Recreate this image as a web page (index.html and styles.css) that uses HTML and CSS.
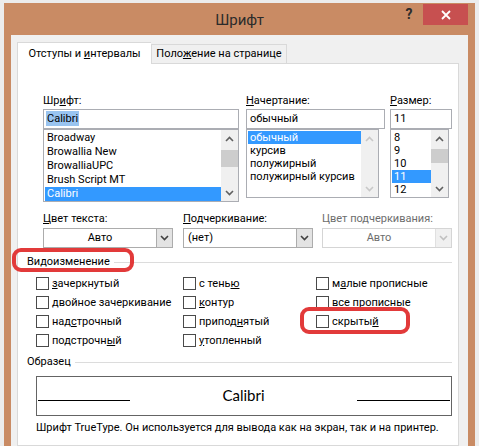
FILE: index.html
```html
<!DOCTYPE html>
<html lang="ru">
<head>
<meta charset="utf-8">
<title>Шрифт</title>
<link rel="stylesheet" href="styles.css">
</head>
<body>
<div class="window">
  <div class="titlebar">
    <div class="title">Шрифт</div>
    <div class="controls">
      <div class="help">?</div>
      <div class="close">
        <svg width="10" height="10" viewBox="0 0 10 10"><path d="M1 1 L9 9 M9 1 L1 9" stroke="#fff" stroke-width="1.8" fill="none"/></svg>
      </div>
    </div>
  </div>
  <div class="client">
    <div class="tabs">
      <div class="tab active">Отступы и <u>и</u>нтервалы</div>
      <div class="tab">Поло<u>ж</u>ение на странице</div>
    </div>
    <div class="panel">
      <div class="font-row">
        <div class="fcol col-font">
          <div class="label">Шр<u>и</u>фт:</div>
          <div class="edit"><span class="sel-text">Calibri</span></div>
          <div class="list list-font">
            <div class="items items14">
              <div class="item">Broadway</div>
              <div class="item">Browallia New</div>
              <div class="item">BrowalliaUPC</div>
              <div class="item">Brush Script MT</div>
              <div class="item selected">Calibri</div>
            </div>
            <div class="scrollbar">
              <div class="arrow"><svg width="9" height="6" viewBox="0 0 9 6"><path d="M1 5 L4.5 1.5 L8 5" stroke="#606060" stroke-width="1.6" fill="none"/></svg></div>
              <div class="track"><div class="thumb"></div></div>
              <div class="arrow"><svg width="9" height="6" viewBox="0 0 9 6"><path d="M1 1 L4.5 4.5 L8 1" stroke="#606060" stroke-width="1.6" fill="none"/></svg></div>
            </div>
          </div>
        </div>
        <div class="fcol col-style">
          <div class="label"><u>Н</u>ачертание:</div>
          <div class="edit">обычный</div>
          <div class="list list-short">
            <div class="items items13">
              <div class="item selected">обычный</div>
              <div class="item">курсив</div>
              <div class="item">полужирный</div>
              <div class="item">полужирный курсив</div>
            </div>
            <div class="scrollbar">
              <div class="arrow"><svg width="9" height="6" viewBox="0 0 9 6"><path d="M1 5 L4.5 1.5 L8 5" stroke="#c8c8c8" stroke-width="1.6" fill="none"/></svg></div>
              <div class="track"></div>
              <div class="arrow"><svg width="9" height="6" viewBox="0 0 9 6"><path d="M1 1 L4.5 4.5 L8 1" stroke="#c8c8c8" stroke-width="1.6" fill="none"/></svg></div>
            </div>
          </div>
        </div>
        <div class="fcol col-size">
          <div class="label"><u>Р</u>азмер:</div>
          <div class="edit">11</div>
          <div class="list list-short">
            <div class="items items13">
              <div class="item">8</div>
              <div class="item">9</div>
              <div class="item">10</div>
              <div class="item selected">11</div>
              <div class="item">12</div>
            </div>
            <div class="scrollbar">
              <div class="arrow"><svg width="9" height="6" viewBox="0 0 9 6"><path d="M1 5 L4.5 1.5 L8 5" stroke="#606060" stroke-width="1.6" fill="none"/></svg></div>
              <div class="track track-size"><div class="thumb"></div></div>
              <div class="arrow"><svg width="9" height="6" viewBox="0 0 9 6"><path d="M1 1 L4.5 4.5 L8 1" stroke="#606060" stroke-width="1.6" fill="none"/></svg></div>
            </div>
          </div>
        </div>
      </div>

      <div class="combo-row">
        <div class="ccol">
          <div class="label"><u>Ц</u>вет текста:</div>
          <div class="combo">
            <div class="combo-text center">Авто</div>
            <div class="drop"><svg width="9" height="6" viewBox="0 0 9 6"><path d="M1 1 L4.5 4.5 L8 1" stroke="#404040" stroke-width="1.6" fill="none"/></svg></div>
          </div>
        </div>
        <div class="ccol">
          <div class="label"><u>П</u>одчеркивание:</div>
          <div class="combo">
            <div class="combo-text">(нет)</div>
            <div class="drop"><svg width="9" height="6" viewBox="0 0 9 6"><path d="M1 1 L4.5 4.5 L8 1" stroke="#404040" stroke-width="1.6" fill="none"/></svg></div>
          </div>
        </div>
        <div class="ccol">
          <div class="label disabled-text">Цвет подчеркивания:</div>
          <div class="combo combo-disabled">
            <div class="combo-text center">Авто</div>
            <div class="drop"><svg width="9" height="6" viewBox="0 0 9 6"><path d="M1 1 L4.5 4.5 L8 1" stroke="#c0c0c0" stroke-width="1.6" fill="none"/></svg></div>
          </div>
        </div>
      </div>

      <div class="group-head"><span>Видоизменение</span><div class="rule"></div></div>
      <div class="checks">
        <div class="chk"><span class="box"></span><span><u>з</u>ачеркнутый</span></div>
        <div class="chk"><span class="box"></span><span>с тень<u>ю</u></span></div>
        <div class="chk"><span class="box"></span><span>м<u>а</u>лые прописные</span></div>
        <div class="chk"><span class="box"></span><span><u>д</u>войное зачеркивание</span></div>
        <div class="chk"><span class="box"></span><span><u>к</u>онтур</span></div>
        <div class="chk"><span class="box"></span><span><u>в</u>се прописные</span></div>
        <div class="chk"><span class="box"></span><span>над<u>с</u>трочный</span></div>
        <div class="chk"><span class="box"></span><span>припод<u>н</u>ятый</span></div>
        <div class="chk"><span class="box"></span><span>скрыты<u>й</u></span></div>
        <div class="chk"><span class="box"></span><span>подстрочн<u>ы</u>й</span></div>
        <div class="chk"><span class="box"></span><span><u>у</u>топленный</span></div>
      </div>

      <div class="group-head sample-head"><span>Образец</span><div class="rule"></div></div>
      <div class="preview">
        <div class="base-line"></div>
        <div class="preview-text">Calibri</div>
        <div class="base-line"></div>
      </div>
      <div class="desc">Шрифт TrueType. Он используется для вывода как на экран, так и на принтер.</div>
    </div>
    <div class="mark mark-group"></div>
    <div class="mark mark-hidden"></div>
  </div>
</div>
</body>
</html>
```

FILE: styles.css
```css
* { box-sizing: border-box; }
html, body { margin: 0; padding: 0; }
body {
  background: #ececec;
  height: 446px;
  overflow: hidden;
  font-family: "Roboto", "Noto Sans", sans-serif;
  font-size: 11px;
  color: #000;
}
u { text-decoration: underline; text-underline-offset: 1px; }

.window {
  margin: 3px 4px 0 4px;
  height: 443px;
  background: #c98b64;
  padding: 0 7px;
  display: flex;
  flex-direction: column;
}

.titlebar {
  height: 32px;
  display: grid;
  flex: none;
}
.title {
  grid-area: 1 / 1;
  justify-self: center;
  align-self: center;
  font-size: 15px;
  color: #2b2b2b;
  padding-top: 2px;
}
.controls {
  grid-area: 1 / 1;
  justify-self: end;
  align-self: start;
  display: flex;
  padding-top: 1px;
}
.help {
  width: 28px;
  height: 21px;
  font-size: 14px;
  font-weight: bold;
  color: #2b2b2b;
  text-align: center;
  line-height: 21px;
}
.close {
  width: 45px;
  height: 21px;
  background: #c75050;
  display: flex;
  align-items: center;
  justify-content: center;
}

.client {
  flex: 1;
  background: #f0f0f0;
  padding: 7px 9px 0 6px;
  position: relative;
  display: flex;
  flex-direction: column;
}

.tabs {
  display: flex;
  align-items: flex-end;
  height: 21px;
}
.tab {
  height: 19px;
  border: 1px solid #d9d9d9;
  border-bottom: none;
  background: #f0f0f0;
  width: 136px;
  text-align: center;
  line-height: 18px;
  white-space: nowrap;
}
.tab.active {
  width: 134px;
  height: 22px;
  margin-bottom: -1px;
  background: #fff;
  position: relative;
  z-index: 1;
  line-height: 22px;
  border-right: none;
}

.panel {
  flex: 1;
  background: #fff;
  border: 1px solid #d9d9d9;
  padding: 29px 6px 0 9px;
}

.label {
  height: 15px;
  line-height: 15px;
  margin-bottom: 1px;
  white-space: nowrap;
}
.disabled-text { color: #6d6d6d; }

.font-row {
  display: flex;
  margin-left: 16px;
  align-items: flex-start;
}
.col-font { width: 196px; margin-right: 7px; }
.col-style { width: 139px; margin-right: 5px; }
.col-size { width: 62px; }

.edit {
  height: 20px;
  border: 1px solid #abadb3;
  background: #fff;
  padding-left: 3px;
  line-height: 18px;
  white-space: nowrap;
}
.sel-text {
  background: #99c4f0;
  padding: 1px 1px;
  margin-left: -1px;
}

.list {
  border: 1px solid #abadb3;
  display: flex;
  background: #fff;
}
.list-font { height: 73px; width: 196px; }
.list-short { height: 69px; }
.col-style .list { width: 133px; }
.col-size .list { width: 59px; }

.items {
  flex: 1;
  min-width: 0;
  padding-top: 1px;
  overflow: hidden;
  white-space: nowrap;
}
.items14 .item { height: 14px; line-height: 14px; }
.items13 .item { height: 13px; line-height: 13px; }
.item { padding-left: 2px; margin-left: 1px; }
.item.selected { background: #3399ff; color: #fff; }

.scrollbar {
  width: 17px;
  flex: none;
  background: #f0f0f0;
  display: flex;
  flex-direction: column;
}
.arrow {
  height: 17px;
  display: flex;
  align-items: center;
  justify-content: center;
}
.track {
  flex: 1;
  padding-top: 3px;
}
.thumb {
  height: 17px;
  background: #cdcdcd;
}
.track-size { padding-top: 2px; }
.track-size .thumb { height: 14px; }

.combo-row {
  display: flex;
  margin-left: 16px;
  margin-top: 9px;
}
.ccol { width: 130px; margin-right: 10px; }
.ccol:last-child { margin-right: 0; margin-left: -1px; }
.ccol .label { margin-bottom: 2px; }
.combo {
  height: 20px;
  border: 1px solid #acacac;
  background: #fff;
  display: flex;
}
.combo-text {
  flex: 1;
  line-height: 18px;
  padding-left: 4px;
}
.combo-text.center { text-align: center; padding-left: 0; }
.drop {
  width: 16px;
  background: #e3e3e3;
  border-left: 1px solid #acacac;
  display: flex;
  align-items: center;
  justify-content: center;
}
.combo-disabled { border-color: #d5d5d5; }
.combo-disabled .combo-text { color: #6d6d6d; }
.combo-disabled .drop { background: #f0f0f0; border-left-color: #e0e0e0; }

.group-head {
  display: flex;
  align-items: center;
  height: 14px;
  line-height: 14px;
  margin-top: 7px;
}
.group-head span { white-space: nowrap; padding-right: 4px; }
.rule {
  flex: 1;
  height: 1px;
  background: #dcdcdc;
}

.checks {
  display: grid;
  grid-template-columns: 147px 133px 1fr;
  grid-auto-rows: 19px;
  margin-left: 9px;
  margin-top: 5px;
}
.chk {
  display: flex;
  align-items: center;
  white-space: nowrap;
}
.box {
  width: 13px;
  height: 13px;
  border: 1px solid #4a4a4a;
  background: #fff;
  margin-right: 3px;
  flex: none;
}

.sample-head { margin-top: 5px; }
.preview {
  margin: 7px 0 0 9px;
  height: 40px;
  border: 1px solid #646464;
  display: grid;
  grid-template-columns: 92px 1fr 93px;
  padding: 0 1px;
  align-items: start;
}
.base-line {
  height: 1px;
  background: #000;
  margin-top: 23px;
}
.preview-text {
  font-family: "Lato", sans-serif;
  font-size: 15px;
  line-height: 16px;
  text-align: center;
  margin-top: 10px;
}
.desc {
  margin: 5px 0 0 9px;
  line-height: 14px;
  white-space: nowrap;
}

.mark {
  position: absolute;
  border: 4px solid #e23a3a;
  border-radius: 9px;
}
.mark-group { left: 1px; top: 213px; width: 122px; height: 24px; }
.mark-hidden { left: 289px; top: 272px; width: 110px; height: 27px; }
```
